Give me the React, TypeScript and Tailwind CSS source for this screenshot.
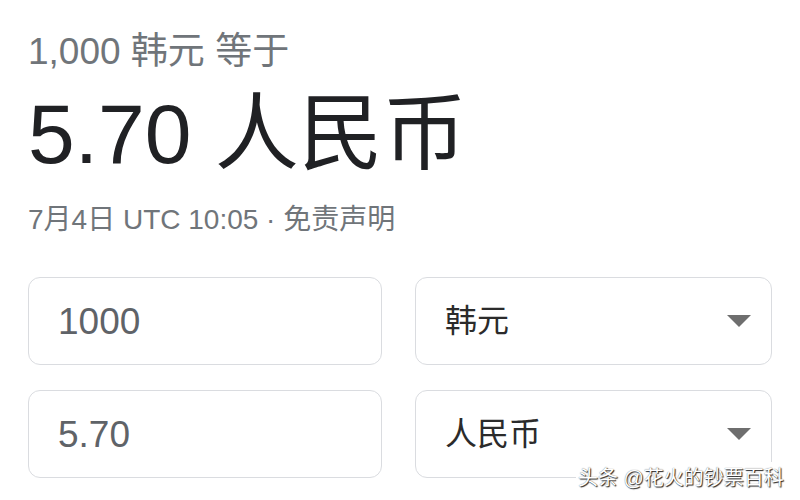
import React from "react";

function Caret() {
  return (
    <svg width="24" height="12" viewBox="0 0 24 12" aria-hidden="true">
      <path d="M0 0 H24 L12 12 Z" fill="#6e6e6e" />
    </svg>
  );
}

function AmountBox({ value }: { value: string }) {
  return (
    <div className="h-[88px] rounded-[12px] border border-[#dadce0] bg-white flex items-center pl-[29px]">
      <span className="text-[37px] leading-none text-[#5f6368]">{value}</span>
    </div>
  );
}

function CurrencySelect({ label }: { label: string }) {
  return (
    <div className="h-[88px] rounded-[12px] border border-[#dadce0] bg-white flex items-center justify-between pl-[29px] pr-[20px]">
      <span className="text-[32px] leading-none text-[#2b2b2b]">{label}</span>
      <Caret />
    </div>
  );
}

export default function App() {
  return (
    <div className="relative w-[800px] h-[500px] overflow-hidden bg-white [font-family:Liberation_Sans,Noto_Sans_CJK_SC,sans-serif]">
      <div className="pl-[28px] pt-[30px]">
        <div className="text-[37px] leading-[44px] text-[#70757a]">1,000 韩元 等于</div>
        <div className="mt-[18px] text-[84px] leading-[84px] text-[#202124]">5.70 人民币</div>
        <div className="mt-[28px] text-[28px] leading-[32px] text-[#70757a]">7月4日 UTC 10:05 · 免责声明</div>

        <div className="mt-[41px] grid grid-cols-[354px_357px] gap-x-[33px] gap-y-[25px]">
          <AmountBox value="1000" />
          <CurrencySelect label="韩元" />
          <AmountBox value="5.70" />
          <CurrencySelect label="人民币" />
        </div>
      </div>

      <div className="absolute left-[576px] top-[462px] bg-white pl-[2px] pr-[10px] py-[3px] text-[20px] leading-[26px] text-white [text-shadow:1px_1px_1px_rgba(0,0,0,0.85),0_0_1px_rgba(0,0,0,0.6)]">
        头条 @花火的钞票百科
      </div>
    </div>
  );
}
